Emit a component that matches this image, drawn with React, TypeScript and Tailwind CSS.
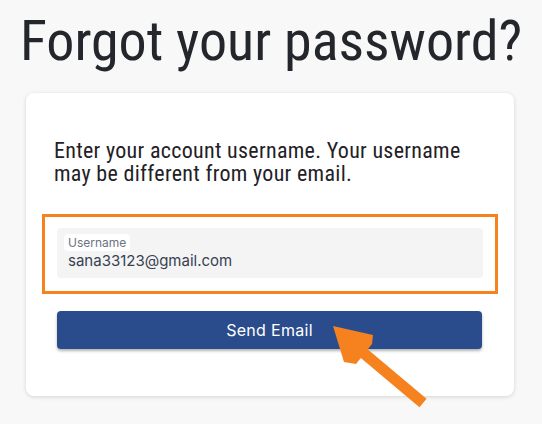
import React from 'react';

const narrow = { fontFamily: 'Roboto, "Open Sans", sans-serif', fontStretch: '75%' };
const round = { fontFamily: 'Inter, "Noto Sans", sans-serif' };

function Arrow() {
  // orange pointer drawn over the button
  return (
    <svg className="pointer-events-none absolute left-0 top-0" width="542" height="424" viewBox="0 0 542 424">
      <line x1="423" y1="403" x2="348" y2="340" stroke="#f5821f" strokeWidth="11" />
      <polygon points="333,326 373,335 372,344 356,364 344,362" fill="#f5821f" />
    </svg>
  );
}

export default function App() {
  return (
    <div className="relative h-[424px] w-[542px] overflow-hidden bg-[#f8f8f8]">
      <h1 className="pt-[6px] text-center text-[56px] leading-[70px] font-normal text-[#23262b] whitespace-nowrap" style={narrow}>
        Forgot your password?
      </h1>

      <div className="mx-[26px] mt-[17px] w-[488px] rounded-lg bg-white px-4 pt-[46px] pb-[47px] shadow-[0_1px_4px_rgba(0,0,0,0.15)]">
        <p className="px-3 text-[22px] leading-[23px] tracking-[0.3px] text-[#1f2126]" style={narrow}>
          Enter your account username. Your username
          <br />
          may be different from your email.
        </p>

        <div className="mt-[29px] border-[3px] border-[#f5821f] px-3 pt-[11px] pb-[13px]">
          <div className="flex h-[50px] flex-col items-start rounded bg-[#f4f4f4] px-[7px] pt-[6px]" style={round}>
            <span className="rounded bg-white px-[4px] text-[12px] leading-[17px] text-[#6b7280]">Username</span>
            <span className="pl-[4px] text-[15px] leading-[19px] text-[#374151]">sana33123@gmail.com</span>
          </div>
        </div>

        <button
          className="mx-[15px] mt-[17px] flex h-[38px] w-[425px] items-center justify-center rounded bg-[#2a4b8c] text-[16px] tracking-[0.3px] text-white shadow-[0_2px_3px_rgba(0,0,0,0.3)]"
          style={round}
        >
          Send Email
        </button>
      </div>

      <Arrow />
    </div>
  );
}
